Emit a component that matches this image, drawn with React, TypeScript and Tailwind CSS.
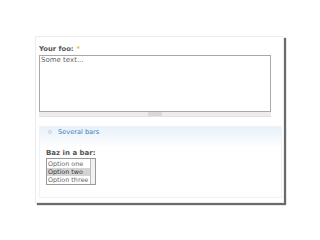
import React from "react";

export default function App() {
  return (
    <div className="w-[320px] h-[240px] bg-white relative overflow-hidden" style={{ fontFamily: '"DejaVu Sans", Verdana, sans-serif' }}>
      <div className="absolute left-[35px] top-[36px] w-[249px] h-[167px] bg-white border border-[#ececec] shadow-[2px_2px_1px_#6b6b6b] pl-[3px] pt-[8px]">
        <div className="text-[6.8px] leading-[9px] font-bold text-[#555] flex items-center gap-[3px]">
          <span>Your foo:</span>
          <span className="text-[#e8c04a]">*</span>
        </div>
        <div className="mt-[1px] w-[232px] h-[57px] border border-[#a8a8a8] bg-white px-[1px] text-[7px] leading-[9px] text-[#666]">
          Some text...
        </div>
        <div className="w-[232px] h-[5px] bg-[#ececec] border-b border-[#e2e2e2] flex justify-center">
          <div className="w-[14px] h-[4px] bg-[#d9d9d9]"></div>
        </div>
        <div className="mt-[9px] w-[243px] h-[72px] border border-[#eef3f8] bg-gradient-to-b from-[#e8f1fa] via-[#ffffff] via-30% to-[#ffffff] relative">
          <div className="flex items-center gap-[6px] pl-[8px] h-[10px]">
            <div className="w-[4px] h-[4px] rounded-full border border-[#c9d3dc]"></div>
            <span className="text-[6.6px] leading-[9px] text-[#3a7cc0]">Several bars</span>
          </div>
          <div className="pl-[6px] pt-[12px]">
            <div className="text-[7px] leading-[9px] font-bold text-[#555]">Baz in a bar:</div>
            <div className="w-[50px] h-[27px] border border-[#9a9a9a] flex bg-white">
              <div className="flex-1 flex flex-col text-[6.4px] leading-[8.3px] text-[#666] pt-[0.5px]">
                <div className="pl-[1px] whitespace-nowrap">Option one</div>
                <div className="pl-[1px] bg-[#d4d4d4] text-[#333] whitespace-nowrap">Option two</div>
                <div className="pl-[1px] whitespace-nowrap overflow-hidden">Option three</div>
              </div>
              <div className="w-[5px] border-l border-[#bbb] bg-[#f2f2f2]"></div>
            </div>
          </div>
        </div>
      </div>
    </div>
  );
}
